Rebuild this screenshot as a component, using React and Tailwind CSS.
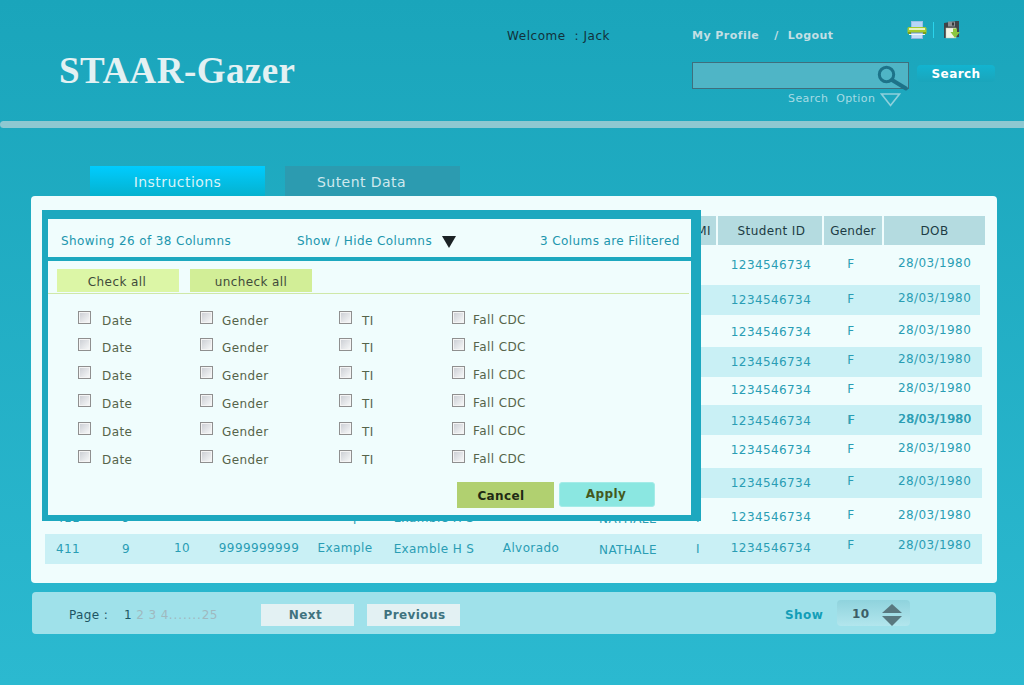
import React from "react";

const Printer = () => (
  <svg width="20" height="18" viewBox="0 0 20 18" className="block">
    <rect x="4.5" y="0.5" width="11" height="7" fill="#b7d6f7" stroke="#9cc0e6" />
    <rect x="0.5" y="6" width="19" height="7" rx="1.5" fill="#a5cc2e" />
    <rect x="2" y="7" width="16" height="2" fill="#e6f2c0" />
    <rect x="1" y="11" width="18" height="2" fill="#7aa01e" />
    <rect x="4.5" y="12" width="11" height="5.5" fill="#c4ddf8" stroke="#8fb5df" />
    <rect x="2" y="13" width="16" height="1" fill="#f2f7f8" />
  </svg>
);

const Floppy = () => (
  <svg width="18" height="19" viewBox="0 0 18 19" className="block">
    <path d="M1 3 L13 1 L16 1 L16 17 L1 18 Z" fill="#3f4447" />
    <rect x="5" y="1.5" width="7" height="5" fill="#8b9093" />
    <rect x="9" y="2.5" width="2" height="3" fill="#33383a" />
    <rect x="3" y="8" width="10" height="10" fill="#f4f6e8" stroke="#c9ccb8" strokeWidth="0.5" />
    <path d="M10 8.5 H14 V12 H17 L12 18 L7.5 12 H10 Z" fill="#8cc63f" />
  </svg>
);

const Magnifier = () => (
  <svg width="38" height="29" viewBox="0 0 38 29" className="block">
    <circle cx="13.5" cy="9.5" r="7.2" fill="none" stroke="#1d7389" strokeWidth="3" />
    <path d="M19 15 L33 23.5" stroke="#1d7389" strokeWidth="4" strokeLinecap="round" />
  </svg>
);

const OutlineTriangle = () => (
  <svg width="21" height="14" viewBox="0 0 21 14" className="block">
    <path d="M1.5 1 H19.5 L10.5 12.5 Z" fill="none" stroke="#8ed0dc" strokeWidth="1.6" />
  </svg>
);

const Check = () => (
  <span className="block w-[13px] h-[13px] border border-[#8f8f8f] bg-gradient-to-br from-[#c9ccd2] to-[#fafbfb] shadow-[inset_0_0_0_1px_#f4f4f4]" />
);

const rows = [
  { h: "h-[40px]", id: "pt-[12px]", f: "pt-[11px]", dob: "pt-[10px]" },
  { h: "h-[30px]", w: "w-[935px]", band: true, id: "pt-[7px]", f: "pt-[6px]", dob: "pt-[5px]" },
  { h: "h-[32px]", id: "pt-[9px]", f: "pt-[8px]", dob: "pt-[7px]" },
  { h: "h-[30px]", band: true, id: "pt-[7px]", f: "pt-[5px]", dob: "pt-[4px]" },
  { h: "h-[28px]", id: "pt-[5px]", f: "pt-[4px]", dob: "pt-[3px]" },
  { h: "h-[30px]", band: true, strong: true, id: "pt-[8px]", f: "pt-[7px]", dob: "pt-[6px]" },
  { h: "h-[33px]", id: "pt-[7px]", f: "pt-[6px]", dob: "pt-[5px]" },
  { h: "h-[30px]", band: true, id: "pt-[7px]", f: "pt-[5px]", dob: "pt-[5px]" },
  { h: "h-[36px]", left: "pt-[12px]", id: "pt-[11px]", f: "pt-[9px]", dob: "pt-[9px]" },
  { h: "h-[30px]", band: true, left: "pt-[7px]", id: "pt-[6px]", f: "pt-[3px]", dob: "pt-[3px]" },
];

const strongCls = "[text-shadow:0.6px_0_0_currentColor]";

function Row({ r }) {
  return (
    <div
      className={`grid grid-cols-[46px_70px_42px_112px_60px_118px_76px_118px_22px_124px_36px_113px] text-center text-[#2a9db4] ${r.h} ${r.w || "w-[937px]"} ${r.band ? "bg-[#c9f0f5]" : ""}`}
    >
      {r.left ? (
        <>
          <div className={r.left}>411</div>
          <div className={r.left}>9</div>
          <div className={r.left}><div className="-mt-px">10</div></div>
          <div className={r.left}><div className="-mt-px">9999999999</div></div>
          <div className={r.left}><div className="-mt-px">Example</div></div>
          <div className={r.left}>Examble H S</div>
          <div className={r.left}><div className="-mt-px">Alvorado</div></div>
          <div className={r.left}><div className="mt-px">NATHALE</div></div>
          <div className={r.left}>I</div>
        </>
      ) : (
        <div className="col-span-9" />
      )}
      <div className={r.id}>1234546734</div>
      <div className={`${r.f} ${r.strong ? strongCls : ""}`}>F</div>
      <div className={`${r.dob} pl-[29px] text-left ${r.strong ? strongCls : ""}`}>28/03/1980</div>
    </div>
  );
}

const labelRows = [
  { h: "h-[27px]" },
  { h: "h-[28px]" },
  { h: "h-[28px]" },
  { h: "h-[28px]" },
  { h: "h-[28px]" },
  { h: "h-[28px]" },
];

function CheckRow({ h }) {
  const label = "text-[#56644a] leading-[16px]";
  return (
    <div className={`flex items-start ${h}`}>
      <div className="w-[152px] pl-[30px] flex items-start gap-[11px]">
        <Check />
        <span className={`${label} mt-[2px]`}>Date</span>
      </div>
      <div className="w-[139px] flex items-start gap-[9px]">
        <Check />
        <span className={`${label} mt-[2px]`}>Gender</span>
      </div>
      <div className="w-[113px] flex items-start gap-[10px]">
        <Check />
        <span className={`${label} mt-[2px]`}>TI</span>
      </div>
      <div className="flex items-start gap-[8px]">
        <Check />
        <span className={`${label} mt-[1px]`}>Fall CDC</span>
      </div>
    </div>
  );
}

export default function App() {
  return (
    <div className="h-[685px] w-[1024px] overflow-hidden bg-gradient-to-b from-[#1aa5bb] to-[#2bb9d0] font-['DejaVu_Sans',Verdana,sans-serif] text-[12px] leading-[16px] tracking-[0.4px]">
      {/* header */}
      <header className="h-[121px] flex items-start">
        <div className="w-[507px] pl-[59px] pt-[49px]">
          <h1 className="font-['Liberation_Serif',serif] font-bold text-[37px] leading-[44px] tracking-[0.45px] text-[#e3f1f3]">
            STAAR-Gazer
          </h1>
        </div>
        <div className="w-[185px] pt-[28px] text-[#12313a] tracking-[0.55px]">Welcome&nbsp; : Jack</div>
        <div className="w-[332px]">
          <div className="flex items-start h-[62px]">
            <div className="pt-[28px] w-[215px] flex font-bold text-[11px] tracking-[0.45px] text-[#c3dfe4]">
              <span>My Profile</span>
              <span className="ml-[15px]">/</span>
              <span className="ml-[9px]">Logout</span>
            </div>
            <div className="pt-[21px] flex items-start">
              <Printer />
              <div className="w-px h-[16px] bg-[#2ad4ec] ml-[6px] mt-px" />
              <div className="ml-[9px] -mt-px"><Floppy /></div>
            </div>
          </div>
          <div className="flex items-start">
            <div className="relative w-[217px] h-[27px] border border-[#3f6f7d] bg-[#4fb5c6]">
              <div className="absolute left-[180px] top-[2px]"><Magnifier /></div>
            </div>
            <div className="ml-[8px] mt-[3px] w-[78px] h-[17px] rounded-[4px] bg-gradient-to-b from-[#12b4d0] to-[#1aa5bb] text-center font-bold text-white leading-[18px] tracking-[0.4px]">
              Search
            </div>
          </div>
          <div className="flex items-start pl-[96px] text-[11px] tracking-[0.42px] text-[#a5dbe4] mt-[2px]">
            <span className="leading-[16px]">Search&nbsp; Option</span>
            <span className="ml-[5px] mt-[2px]"><OutlineTriangle /></span>
          </div>
        </div>
      </header>

      {/* rule */}
      <div className="h-[7px] rounded-l-full bg-[#8ec8d1]" />

      {/* tabs */}
      <nav className="flex gap-[20px] pl-[90px] pt-[38px] text-[14px] tracking-[0.45px]">
        <div className="w-[175px] h-[30px] pt-[8px] text-center bg-gradient-to-b from-[#00ccff] to-[#05b2cf] text-[#d9f3f7]">Instructions</div>
        <div className="w-[175px] h-[30px] pt-[8px] pl-[32px] bg-[#2c9bb0] text-[#cfe9ee]">Sutent Data</div>
      </nav>

      {/* card */}
      <section className="relative ml-[31px] w-[966px] h-[387px] rounded-[4px] bg-[#f0fdfd] pl-[14px] pt-[20px]">
        <div className="flex gap-[2px] h-[29px] w-[940px] text-center text-[#1d3b44] leading-[31px]">
          <div className="w-[671px] bg-[#b4dbe0] text-right pr-[5px]">MI</div>
          <div className="w-[104px] pl-[3px] bg-[#b4dbe0]">Student ID</div>
          <div className="w-[58px] bg-[#b4dbe0] tracking-[0.2px]">Gender</div>
          <div className="w-[101px] bg-[#b4dbe0]">DOB</div>
        </div>
        {rows.map((r, i) => (
          <Row key={i} r={r} />
        ))}

        {/* modal */}
        <div className="absolute left-[11px] top-[14px] w-[659px] h-[311px] bg-[#1da8bf] pl-[6px] pr-[10px] pt-[9px] pb-[6px] flex flex-col">
          <div className="h-[38px] bg-[#f0fdfd] flex items-start pt-[14px] pl-[13px] text-[#2196ad]">
            <span className="w-[236px]">Showing 26 of 38 Columns</span>
            <span>Show / Hide Columns</span>
            <svg width="14" height="12" viewBox="0 0 14 12" className="ml-[10px] mt-[3px]">
              <path d="M0 0 H14 L7 12 Z" fill="#1c2225" />
            </svg>
            <span className="ml-[84px]">3 Colums are Filitered</span>
          </div>
          <div className="mt-[4px] flex-1 bg-[#f0fdfd] flex flex-col">
            <div className="flex gap-[11px] pl-[9px] pt-[8px] pb-[1px] mr-[2px] border-b border-[#cfe8a8] text-[#3f4a3a]">
              <div className="w-[122px] h-[23px] pr-[2px] bg-[#dcf6a6] text-center leading-[27px]">Check all</div>
              <div className="w-[122px] h-[23px] bg-[#d2ee97] text-center leading-[27px]">uncheck all</div>
            </div>
            <div className="pt-[17px]">
              {labelRows.map((l, i) => (
                <CheckRow key={i} h={l.h} />
              ))}
            </div>
            <div className="flex items-start pl-[409px] mt-[4px] gap-[5px] font-bold">
              <div className="w-[97px] h-[26px] pr-[9px] bg-[#b1d070] text-center text-[#1f2a14] leading-[29px]">Cancel</div>
              <div className="w-[96px] h-[25px] pr-[2px] rounded-[3px] border border-[#a4ece8] bg-[#8be7e1] text-center text-[#44591c] leading-[23px]">Apply</div>
            </div>
          </div>
        </div>
      </section>

      {/* footer */}
      <footer className="mt-[9px] ml-[32px] w-[964px] h-[42px] rounded-[4px] bg-[#9fe1ea] flex items-start">
        <div className="pl-[37px] pt-[15px] w-[92px] text-[#1e5563]">Page :</div>
        <div className="pt-[15px] w-[137px] text-[#9fb9bf]">
          <span className="text-[#1e5563]">1</span> 2 3 4<span className="tracking-[0.9px]">.......</span>25
        </div>
        <div className="mt-[12px] w-[93px] h-[22px] pr-[4px] bg-[#e3f1f3] text-center font-bold text-[#3f737f] leading-[22px]">Next</div>
        <div className="ml-[13px] mt-[12px] w-[93px] h-[22px] pl-[2px] bg-[#e3f1f3] text-center font-bold text-[#3f737f] leading-[22px]">Previous</div>
        <div className="ml-[325px] pt-[15px] w-[52px] font-bold text-[#139eb8]">Show</div>
        <div className="mt-[8px] w-[73px] h-[26px] rounded-[4px] bg-gradient-to-b from-[#8fd3dd] to-[#b2e6ed] flex items-start">
          <span className="pl-[15px] pt-[6px] w-[45px] font-bold text-[#3c5d66]">10</span>
          <svg width="20" height="27" viewBox="0 0 20 27" className="block">
            <path d="M0 13 L10 4 L20 13 Z" fill="#59787f" />
            <path d="M0 16 H20 L10 26 Z" fill="#59787f" />
          </svg>
        </div>
      </footer>
    </div>
  );
}
